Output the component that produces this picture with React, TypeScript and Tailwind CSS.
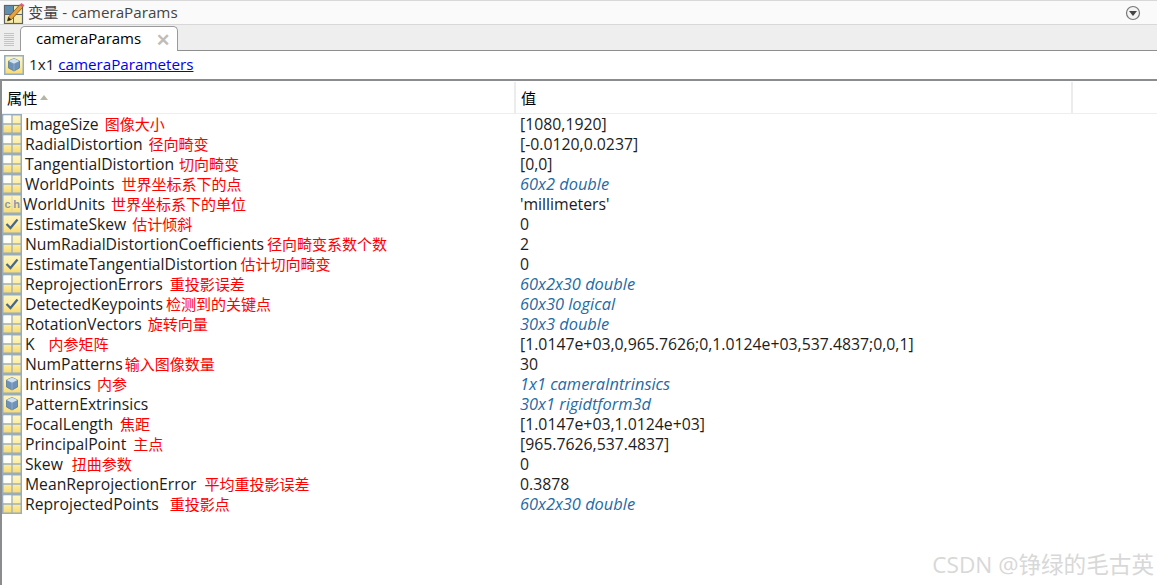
import React from 'react';

type IconKind = 'grid' | 'char' | 'check' | 'cube';

interface Row {
  icon: IconKind;
  name: string;
  note?: string;
  noteClass?: string;
  value: string;
  italic?: boolean;
}

const rows: Row[] = [
  { icon: 'grid', name: 'ImageSize', note: '图像大小', noteClass: 'ml-[6px]', value: '[1080,1920]' },
  { icon: 'grid', name: 'RadialDistortion', note: '径向畸变', noteClass: 'ml-[6px]', value: '[-0.0120,0.0237]' },
  { icon: 'grid', name: 'TangentialDistortion', note: '切向畸变', noteClass: 'ml-[5px]', value: '[0,0]' },
  { icon: 'grid', name: 'WorldPoints', note: '世界坐标系下的点', noteClass: 'ml-[7px]', value: '60x2 double', italic: true },
  { icon: 'char', name: 'WorldUnits', note: '世界坐标系下的单位', noteClass: 'ml-[6px]', value: "'millimeters'" },
  { icon: 'check', name: 'EstimateSkew', note: '估计倾斜', noteClass: 'ml-[6px]', value: '0' },
  { icon: 'grid', name: 'NumRadialDistortionCoefficients', note: '径向畸变系数个数', noteClass: 'ml-[3px]', value: '2' },
  { icon: 'check', name: 'EstimateTangentialDistortion', note: '估计切向畸变', noteClass: 'ml-[3px]', value: '0' },
  { icon: 'grid', name: 'ReprojectionErrors', note: '重投影误差', noteClass: 'ml-[7px]', value: '60x2x30 double', italic: true },
  { icon: 'check', name: 'DetectedKeypoints', note: '检测到的关键点', noteClass: 'ml-[3px]', value: '60x30 logical', italic: true },
  { icon: 'grid', name: 'RotationVectors', note: '旋转向量', noteClass: 'ml-[6px]', value: '30x3 double', italic: true },
  { icon: 'grid', name: 'K', note: '内参矩阵', noteClass: 'ml-[14px]', value: '[1.0147e+03,0,965.7626;0,1.0124e+03,537.4837;0,0,1]' },
  { icon: 'grid', name: 'NumPatterns', note: '输入图像数量', noteClass: 'ml-[2px]', value: '30' },
  { icon: 'cube', name: 'Intrinsics', note: '内参', noteClass: 'ml-[6px]', value: '1x1 cameraIntrinsics', italic: true },
  { icon: 'cube', name: 'PatternExtrinsics', value: '30x1 rigidtform3d', italic: true },
  { icon: 'grid', name: 'FocalLength', note: '焦距', noteClass: 'ml-[7px]', value: '[1.0147e+03,1.0124e+03]' },
  { icon: 'grid', name: 'PrincipalPoint', note: '主点', noteClass: 'ml-[7px]', value: '[965.7626,537.4837]' },
  { icon: 'grid', name: 'Skew', note: '扭曲参数', noteClass: 'ml-[9px]', value: '0' },
  { icon: 'grid', name: 'MeanReprojectionError', note: '平均重投影误差', noteClass: 'ml-[8px]', value: '0.3878' },
  { icon: 'grid', name: 'ReprojectedPoints', note: '重投影点', noteClass: 'ml-[11px]', value: '60x2x30 double', italic: true },
];

const GoldDefs = ({ id }: { id: string }) => (
  <defs>
    <linearGradient id={id} x1="0" y1="0" x2="0" y2="1">
      <stop offset="0" stopColor="#fdf6c8" />
      <stop offset="0.55" stopColor="#fdec9c" />
      <stop offset="1" stopColor="#f8d970" />
    </linearGradient>
  </defs>
);

const Cube = () => (
  <g>
    <path d="M10 3.5 L15.5 6 V13 L10 16 L4.5 13 V6 Z" fill="#6f93b8" stroke="#557aa0" strokeWidth="0.8" />
    <path d="M4.5 6 L10 8.8 L15.5 6 L10 3.5 Z" fill="#d3e2ef" />
    <path d="M10 8.8 V16" stroke="#8eaccb" strokeWidth="1" />
  </g>
);

const TypeIcon = ({ kind }: { kind: IconKind }) => {
  const id = `gold-${kind}`;
  return (
    <svg width="20" height="20" viewBox="0 0 20 20" className="shrink-0">
      <GoldDefs id={id} />
      <rect x="0.75" y="0.75" width="18.5" height="18.5" fill={`url(#${id})`} stroke="#97acbf" strokeWidth="1.5" />
      {kind === 'grid' && (
        <>
          <rect x="1.5" y="1.5" width="8" height="8" fill="#fffff8" />
          <path d="M10 1 V19 M1 10 H19" stroke="#9fb0bd" strokeWidth="1.3" />
        </>
      )}
      {kind === 'char' && (
        <>
          <path d="M10 2 V18" stroke="#d8d4b8" strokeWidth="1" />
          <text x="5.6" y="14" textAnchor="middle" fontSize="11" fontWeight="700" fontFamily="Liberation Sans, sans-serif" fill="#8a98a8">c</text>
          <text x="14.5" y="14" textAnchor="middle" fontSize="11" fontWeight="700" fontFamily="Liberation Sans, sans-serif" fill="#8a98a8">h</text>
        </>
      )}
      {kind === 'check' && (
        <path d="M4.5 10 L8.5 14 L15.5 5.5" fill="none" stroke="#47678c" strokeWidth="2.2" />
      )}
      {kind === 'cube' && <Cube />}
    </svg>
  );
};

const PanelIcon = () => (
  <svg width="22" height="22" viewBox="0 0 22 22" className="shrink-0">
    <rect x="1.5" y="3.5" width="18" height="18" fill="#f6eaa8" stroke="#5d6468" strokeWidth="1.2" />
    <rect x="2" y="4" width="8" height="8" fill="#5f8fb0" />
    <path d="M10.5 4 V21 M2 12.5 H19" stroke="#5d6468" strokeWidth="1" />
    <path d="M4.5 19 L5.5 15 L17 2.5 L20 5 L8.5 17.5 Z" fill="#e6a23c" stroke="#7a5226" strokeWidth="0.8" />
    <path d="M17 2.5 L18.5 1 L21.5 3.2 L20 5 Z" fill="#e0608c" />
    <path d="M4.5 19 L5.5 15 L8.5 17.5 Z" fill="#2c2a26" />
  </svg>
);

export default function App() {
  return (
    <div className="relative flex h-[585px] w-[1157px] flex-col overflow-hidden bg-white font-['Open_Sans','Noto_Sans_CJK_SC',sans-serif] text-[15.2px] leading-[20px] text-[#1c1c1c]">
      {/* title bar */}
      <div className="flex h-[25px] items-center border-y border-[#d8d8d8] bg-[#fafafa] pl-[3px] pr-[16px] text-[#444]">
        <PanelIcon />
        <span className="-mt-[1px] ml-[3px]">变量 - cameraParams</span>
        <svg width="16" height="16" viewBox="0 0 16 16" className="ml-auto">
          <circle cx="8" cy="8" r="6.5" fill="#f4f4f4" stroke="#777" strokeWidth="1.2" />
          <path d="M4 6 H12 L8 11 Z" fill="#444" />
        </svg>
      </div>
      {/* tab strip */}
      <div className="flex h-[26px] items-end border-b border-[#8f8f8f] bg-[#eeeeee] pl-[4px]">
        <div className="mb-[4px] mr-[6px] h-[14px] w-[10px] bg-[repeating-linear-gradient(0deg,#c4c4c4_0,#c4c4c4_1px,transparent_1px,transparent_2px)]" />
        <div className="-mb-px flex h-[25px] w-[158px] items-center rounded-t-[5px] border border-b-0 border-[#9a9a9a] bg-white pl-[15px]">
          <span className="-mt-[2px] text-[15px] text-black">cameraParams</span>
          <span className="ml-[15px] text-[17px] font-bold leading-none text-[#bdbdbd]">✕</span>
        </div>
      </div>
      {/* class line */}
      <div className="flex h-[28px] items-center gap-[5px] pl-[4px]">
        <TypeIcon kind="cube" />
        <span className="-mt-[2px]">
          1x1 <a href="#" className="text-[#0000ee] underline">cameraParameters</a>
        </span>
      </div>
      {/* table */}
      <div className="flex flex-1 flex-col border-l-2 border-t-2 border-[#8a8c8e]">
        <div className="flex h-[33px] shrink-0 items-center border-b border-[#eeeeee] pt-[1px] text-black">
          <div className="flex h-full w-[514px] items-center border-r-2 border-[#ececec] pl-[5px]">
            属性
            <span className="ml-[3px] h-0 w-0 border-x-[4px] border-b-[5px] border-x-transparent border-b-[#b5b5a8]" />
          </div>
          <div className="flex h-full w-[557px] items-center border-r-2 border-[#ececec] pl-[5px]">值</div>
        </div>
        <div className="flex flex-col">
          {rows.map((row) => (
            <div key={row.name} className="flex h-[20px] items-center whitespace-nowrap">
              <div className="flex w-[518px] items-center text-[15.7px]">
                <TypeIcon kind={row.icon} />
                <span className={row.icon === 'char' ? 'ml-[1px]' : 'ml-[3px]'}>{row.name}</span>
                {row.note && <span className={`${row.noteClass} text-[15px] text-[#ff0000]`}>{row.note}</span>}
              </div>
              <span className={row.italic ? 'text-[16.4px] italic text-[#1f6aa5]' : 'text-[15.8px]'}>{row.value}</span>
            </div>
          ))}
        </div>
      </div>
      <div className="absolute bottom-[8px] right-[3px] text-[22.6px] leading-none text-[#d8d8d8]">CSDN @铮绿的毛古英</div>
    </div>
  );
}
